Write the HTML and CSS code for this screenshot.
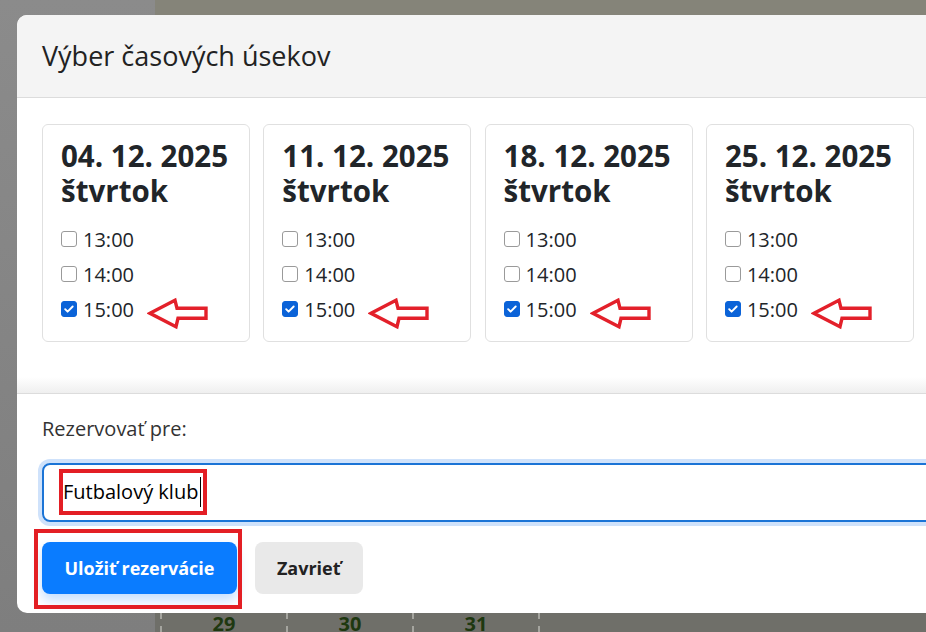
FILE: index.html
```html
<!DOCTYPE html>
<html lang="sk">
<head>
<meta charset="utf-8">
<title>Výber časových úsekov</title>
<link rel="stylesheet" href="styles.css">
</head>
<body>
<div class="backdrop">
  <div class="side"></div>
  <div class="main">
    <div class="topbar"></div>
    <div class="mainfill"></div>
    <div class="days">
      <div class="day">29</div>
      <div class="day">30</div>
      <div class="day">31</div>
      <div class="day"></div>
    </div>
  </div>
</div>

<div class="modal">
  <div class="modal-header">
    <h5 class="modal-title">Výber časových úsekov</h5>
  </div>
  <div class="modal-body">
    <div class="cards">
      <div class="card">
        <h3 class="card-date">04. 12. 2025<br>štvrtok</h3>
        <div class="slot"><span class="cb"></span><span>13:00</span></div>
        <div class="slot"><span class="cb"></span><span>14:00</span></div>
        <div class="slot"><span class="cb checked"><svg viewBox="0 0 16 16" width="14" height="14"><path d="M3.6 8.2l2.8 2.8L12.2 5.2" fill="none" stroke="#fff" stroke-width="2.2" stroke-linecap="round" stroke-linejoin="round"/></svg></span><span>15:00</span>
          <svg class="arrow" width="64" height="33" viewBox="0 0 64 33"><polygon points="3,16.3 28,3.3 30,11.3 59,11.3 59,21.3 31,21.3 29,29.7" fill="none" stroke="#e3202a" stroke-width="3.4" stroke-linejoin="miter"/></svg>
        </div>
      </div>
      <div class="card">
        <h3 class="card-date">11. 12. 2025<br>štvrtok</h3>
        <div class="slot"><span class="cb"></span><span>13:00</span></div>
        <div class="slot"><span class="cb"></span><span>14:00</span></div>
        <div class="slot"><span class="cb checked"><svg viewBox="0 0 16 16" width="14" height="14"><path d="M3.6 8.2l2.8 2.8L12.2 5.2" fill="none" stroke="#fff" stroke-width="2.2" stroke-linecap="round" stroke-linejoin="round"/></svg></span><span>15:00</span>
          <svg class="arrow" width="64" height="33" viewBox="0 0 64 33"><polygon points="3,16.3 28,3.3 30,11.3 59,11.3 59,21.3 31,21.3 29,29.7" fill="none" stroke="#e3202a" stroke-width="3.4" stroke-linejoin="miter"/></svg>
        </div>
      </div>
      <div class="card">
        <h3 class="card-date">18. 12. 2025<br>štvrtok</h3>
        <div class="slot"><span class="cb"></span><span>13:00</span></div>
        <div class="slot"><span class="cb"></span><span>14:00</span></div>
        <div class="slot"><span class="cb checked"><svg viewBox="0 0 16 16" width="14" height="14"><path d="M3.6 8.2l2.8 2.8L12.2 5.2" fill="none" stroke="#fff" stroke-width="2.2" stroke-linecap="round" stroke-linejoin="round"/></svg></span><span>15:00</span>
          <svg class="arrow" width="64" height="33" viewBox="0 0 64 33"><polygon points="3,16.3 28,3.3 30,11.3 59,11.3 59,21.3 31,21.3 29,29.7" fill="none" stroke="#e3202a" stroke-width="3.4" stroke-linejoin="miter"/></svg>
        </div>
      </div>
      <div class="card">
        <h3 class="card-date">25. 12. 2025<br>štvrtok</h3>
        <div class="slot"><span class="cb"></span><span>13:00</span></div>
        <div class="slot"><span class="cb"></span><span>14:00</span></div>
        <div class="slot"><span class="cb checked"><svg viewBox="0 0 16 16" width="14" height="14"><path d="M3.6 8.2l2.8 2.8L12.2 5.2" fill="none" stroke="#fff" stroke-width="2.2" stroke-linecap="round" stroke-linejoin="round"/></svg></span><span>15:00</span>
          <svg class="arrow" width="64" height="33" viewBox="0 0 64 33"><polygon points="3,16.3 28,3.3 30,11.3 59,11.3 59,21.3 31,21.3 29,29.7" fill="none" stroke="#e3202a" stroke-width="3.4" stroke-linejoin="miter"/></svg>
        </div>
      </div>
    </div>
  </div>
  <div class="modal-footer">
    <div class="label">Rezervovať pre:</div>
    <div class="field">
      <span class="typed">Futbalový klub<span class="caret"></span></span>
    </div>
    <div class="actions">
      <div class="hl"><button class="btn btn-primary" type="button">Uložiť rezervácie</button></div>
      <button class="btn btn-secondary" type="button">Zavrieť</button>
    </div>
  </div>
</div>
</body>
</html>
```

FILE: styles.css
```css
html, body {
  margin: 0;
  padding: 0;
}

body {
  width: 926px;
  height: 632px;
  overflow: hidden;
  position: relative;
  font-family: "Open Sans", "Noto Sans", sans-serif;
}

.backdrop {
  display: grid;
  grid-template-columns: 155px 1fr;
  height: 632px;
}

.side {
  background: linear-gradient(to bottom, #8b8b8b, #7e7e7e);
}

.main {
  display: flex;
  flex-direction: column;
}

.topbar {
  height: 15px;
  background: #858479;
}

.mainfill {
  flex: 1;
  background: #7a7972;
}

.days {
  height: 19px;
  background: #6f6f69;
  display: flex;
  padding-left: 5px;
}

.day {
  width: 126px;
  box-sizing: border-box;
  border-left: 2px dashed #a5a59f;
  text-align: center;
  font-weight: 700;
  font-size: 20px;
  line-height: 20px;
  padding-top: 1px;
  color: #1e3810;
}

.modal {
  position: absolute;
  left: 17px;
  top: 15px;
  width: 960px;
  height: 598px;
  background: #fff;
  border-radius: 10px;
  overflow: hidden;
  display: flex;
  flex-direction: column;
  color: #212529;
}

.modal-header {
  height: 83px;
  box-sizing: border-box;
  background: #f4f4f4;
  border-bottom: 1px solid #dcdcdc;
  display: flex;
  align-items: center;
  padding-left: 25px;
  flex: none;
}

.modal-title {
  margin: 0;
  font-size: 27px;
  font-weight: 400;
  line-height: 1.2;
  color: #222;
}

.modal-body {
  height: 296px;
  box-sizing: border-box;
  padding: 26px 25px 0;
  background: linear-gradient(to bottom, #fff calc(100% - 16px), #efefef);
  border-bottom: 1px solid #dcdcdc;
  flex: none;
}

.cards {
  display: flex;
  gap: 13.3px;
}

.card {
  width: 208px;
  box-sizing: border-box;
  border: 1px solid #e0e0e0;
  border-radius: 6px;
  padding: 13px 18px 14.5px;
}

.card-date {
  margin: 0 0 13.5px;
  font-size: 29.5px;
  line-height: 35px;
  font-weight: 700;
  white-space: nowrap;
  color: #212529;
}

.slot {
  display: flex;
  align-items: center;
  height: 35px;
  font-size: 20px;
  color: #212529;
}

.cb {
  width: 16px;
  height: 16px;
  box-sizing: border-box;
  border: 1px solid #9a9a9a;
  border-radius: 3px;
  margin-right: 6px;
  flex: none;
  display: flex;
  align-items: center;
  justify-content: center;
  background: #fff;
}

.cb.checked {
  background: #0b63d8;
  border-color: #0b63d8;
}

.arrow {
  margin-left: 13px;
  margin-top: 8px;
  flex: none;
}

.modal-footer {
  flex: 1;
  padding: 21px 25px 18px;
  box-sizing: border-box;
}

.label {
  font-size: 20px;
  line-height: 28.5px;
  color: #333;
}

.field {
  margin-top: 19px;
  height: 59px;
  box-sizing: border-box;
  border: 2px solid #1b74d6;
  border-radius: 8px;
  box-shadow: 0 0 0 4px #cfe2fb;
  display: flex;
  align-items: center;
  padding-left: 15px;
  font-size: 20px;
  color: #000;
}

.typed {
  display: inline-flex;
  align-items: center;
  height: 46.7px;
  box-sizing: border-box;
  border: 4px solid #e31e24;
  padding-right: 2px;
  line-height: 1;
}

.caret {
  width: 1px;
  height: 30px;
  background: #000;
  margin-left: 2px;
}

.actions {
  margin-top: 20px;
  display: flex;
  gap: 18px;
}

.hl {
  position: relative;
  display: flex;
}

.hl::after {
  content: "";
  position: absolute;
  left: -8px;
  top: -13px;
  right: -5px;
  bottom: -15px;
  border: 4px solid #e31e24;
  pointer-events: none;
}

.btn {
  height: 52.5px;
  border: 0;
  border-radius: 8px;
  font-family: "Open Sans", "Noto Sans", sans-serif;
  font-weight: 700;
  font-size: 18px;
  padding: 0 22.5px;
  cursor: pointer;
}

.btn-primary {
  background: #0a7cff;
  color: #fff;
  box-shadow: 0 6px 12px rgba(10, 124, 255, 0.25);
}

.btn-secondary {
  background: #e9e9e9;
  color: #222;
  padding: 0 22px;
}
```
